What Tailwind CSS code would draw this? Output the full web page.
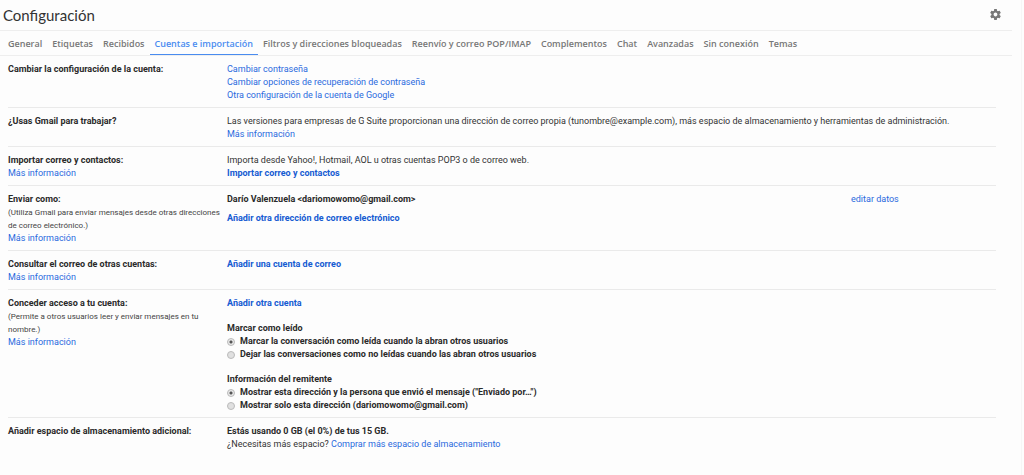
<!DOCTYPE html>
<html lang="es">
<head>
<meta charset="utf-8">
<meta name="viewport" content="width=device-width, initial-scale=1">
<title>Configuración</title>
<script src="https://cdn.jsdelivr.net/npm/@tailwindcss/browser@4"></script>
</head>
<body class="min-h-screen bg-[#fdfdfd] pr-0.5 font-['Roboto',sans-serif] text-[9px] leading-[13px] text-[#333]">
<div class="min-h-screen border-r border-[#f6f6f6] pr-[9px]">
  <header class="flex h-[31px] items-center justify-between border-b border-[#eee] pr-[10px] pl-[3px]">
    <h1 class="font-['Lato','Open_Sans',sans-serif] text-[15px] leading-5 text-[#333]">Configuración</h1>
    <button type="button" aria-label="Ajustes" class="mb-[2px] text-[#777]">
      <svg class="size-[13px]" viewBox="0 0 24 24" fill="currentColor" aria-hidden="true"><path d="M19.43 12.98c.04-.32.07-.64.07-.98s-.03-.66-.07-.98l2.11-1.65c.19-.15.24-.42.12-.64l-2-3.46c-.12-.22-.39-.3-.61-.22l-2.49 1c-.52-.4-1.08-.73-1.69-.98l-.38-2.65C14.46 2.18 14.25 2 14 2h-4c-.25 0-.46.18-.49.42l-.38 2.65c-.61.25-1.17.59-1.69.98l-2.49-1c-.23-.09-.49 0-.61.22l-2 3.46c-.13.22-.07.49.12.64l2.11 1.65c-.04.32-.07.65-.07.98s.03.66.07.98l-2.11 1.65c-.19.15-.24.42-.12.64l2 3.46c.12.22.39.3.61.22l2.49-1c.52.4 1.08.73 1.69.98l.38 2.65c.03.24.24.42.49.42h4c.25 0 .46-.18.49-.42l.38-2.65c.61-.25 1.17-.59 1.69-.98l2.49 1c.23.09.49 0 .61-.22l2-3.46c.12-.22.07-.49-.12-.64l-2.11-1.65zM12 15.500c-1.930 0-3.500-1.570-3.500-3.500s1.570-3.500 3.500-3.500 3.500 1.570 3.500 3.500-1.570 3.500-3.500 3.500z"/></svg>
    </button>
  </header>

  <nav aria-label="Secciones" class="flex h-[25px] border-b border-[#eee] pl-[3px] font-['Open_Sans',sans-serif] font-semibold whitespace-nowrap text-[#777]">
    <a href="#" class="px-[5px] pt-[6px]">General</a>
    <a href="#" class="px-[5px] pt-[6px]">Etiquetas</a>
    <a href="#" class="px-[5px] pt-[6px]">Recibidos</a>
    <a href="#" aria-current="page" class="border-b border-[#4a8cf0] px-[5px] pt-[6px] text-[#4a8cf0]">Cuentas e importación</a>
    <a href="#" class="px-[5px] pt-[6px]">Filtros y direcciones bloqueadas</a>
    <a href="#" class="px-[5px] pt-[6px]">Reenvío y correo POP/IMAP</a>
    <a href="#" class="px-[5px] pt-[6px]">Complementos</a>
    <a href="#" class="px-[5px] pt-[6px]">Chat</a>
    <a href="#" class="px-[5px] pt-[6px]">Avanzadas</a>
    <a href="#" class="px-[5px] pt-[6px]">Sin conexión</a>
    <a href="#" class="px-[5px] pt-[6px]">Temas</a>
  </nav>

  <main class="mr-4 ml-2 divide-y divide-[#eaeaea]">
    <section class="grid grid-cols-[219px_1fr] pt-[7px] pb-[5px]">
      <h2 class="font-bold text-[#2a2a2a]">Cambiar la configuración de la cuenta:</h2>
      <div class="flex flex-col items-start text-[#2a6add]">
        <a href="#">Cambiar contraseña</a>
        <a href="#">Cambiar opciones de recuperación de contraseña</a>
        <a href="#">Otra configuración de la cuenta de Google</a>
      </div>
    </section>

    <section class="grid grid-cols-[219px_1fr] pt-[7px] pb-[5px]">
      <h2 class="font-bold text-[#2a2a2a]">¿Usas Gmail para trabajar?</h2>
      <div>
        <p>Las versiones para empresas de G Suite proporcionan una dirección de correo propia (tunombre@example.com), más espacio de almacenamiento y herramientas de administración.</p>
        <a href="#" class="block text-[#2a6add]">Más información</a>
      </div>
    </section>

    <section class="grid grid-cols-[219px_1fr] pt-[7px] pb-[5px]">
      <div>
        <h2 class="font-bold text-[#2a2a2a]">Importar correo y contactos:</h2>
        <a href="#" class="block text-[#2a6add]">Más información</a>
      </div>
      <div>
        <p>Importa desde Yahoo!, Hotmail, AOL u otras cuentas POP3 o de correo web.</p>
        <a href="#" class="block font-bold text-[#155bd2]">Importar correo y contactos</a>
      </div>
    </section>

    <section class="grid grid-cols-[219px_1fr_145px] pt-[7px] pb-[5px]">
      <div>
        <h2 class="font-bold text-[#2a2a2a]">Enviar como:</h2>
        <p class="text-[8px] leading-[13px] text-[#444]">(Utiliza Gmail para enviar mensajes desde otras direcciones de correo electrónico.)</p>
        <a href="#" class="block text-[#2a6add]">Más información</a>
      </div>
      <div class="flex flex-col items-start gap-1.5 font-bold">
        <p class="text-[#2a2a2a]">Darío Valenzuela &lt;dariomowomo@gmail.com&gt;</p>
        <a href="#" class="text-[#155bd2]">Añadir otra dirección de correo electrónico</a>
      </div>
      <div><a href="#" class="text-[#2a6add]">editar datos</a></div>
    </section>

    <section class="grid grid-cols-[219px_1fr] pt-[7px] pb-[5px]">
      <div>
        <h2 class="font-bold text-[#2a2a2a]">Consultar el correo de otras cuentas:</h2>
        <a href="#" class="block text-[#2a6add]">Más información</a>
      </div>
      <div><a href="#" class="block font-bold text-[#155bd2]">Añadir una cuenta de correo</a></div>
    </section>

    <section class="grid grid-cols-[219px_1fr] pt-[7px] pb-[5px]">
      <div>
        <h2 class="font-bold text-[#2a2a2a]">Conceder acceso a tu cuenta:</h2>
        <p class="text-[8px] leading-[13px] text-[#444]">(Permite a otros usuarios leer y enviar mensajes en tu nombre.)</p>
        <a href="#" class="block text-[#2a6add]">Más información</a>
      </div>
      <div class="flex flex-col gap-3 font-bold text-[#2a2a2a]">
        <a href="#" class="block text-[#155bd2]">Añadir otra cuenta</a>
        <fieldset>
          <legend>Marcar como leído</legend>
          <label class="flex items-center gap-[5px]"><input type="radio" name="leido" checked class="size-2 appearance-none rounded-full border border-[#bbb] bg-[#eee] checked:bg-[radial-gradient(circle,#555_0_1px,#e8e8e8_2px)]">Marcar la conversación como leída cuando la abran otros usuarios</label>
          <label class="flex items-center gap-[5px]"><input type="radio" name="leido" class="size-2 appearance-none rounded-full border border-[#bbb] bg-[#e0e0e0] checked:bg-[radial-gradient(circle,#555_0_1px,#e8e8e8_2px)]">Dejar las conversaciones como no leídas cuando las abran otros usuarios</label>
        </fieldset>
        <fieldset>
          <legend>Información del remitente</legend>
          <label class="flex items-center gap-[5px]"><input type="radio" name="remitente" checked class="size-2 appearance-none rounded-full border border-[#bbb] bg-[#eee] checked:bg-[radial-gradient(circle,#555_0_1px,#e8e8e8_2px)]">Mostrar esta dirección y la persona que envió el mensaje ("Enviado por…")</label>
          <label class="flex items-center gap-[5px]"><input type="radio" name="remitente" class="size-2 appearance-none rounded-full border border-[#bbb] bg-[#e0e0e0] checked:bg-[radial-gradient(circle,#555_0_1px,#e8e8e8_2px)]">Mostrar solo esta dirección (dariomowomo@gmail.com)</label>
        </fieldset>
      </div>
    </section>

    <section class="grid grid-cols-[219px_1fr] pt-[7px] pb-[5px]">
      <h2 class="font-bold text-[#2a2a2a]">Añadir espacio de almacenamiento adicional:</h2>
      <div>
        <p class="font-bold text-[#2a2a2a]">Estás usando 0 GB (el 0%) de tus 15 GB.</p>
        <p>¿Necesitas más espacio? <a href="#" class="text-[#2a6add]">Comprar más espacio de almacenamiento</a></p>
      </div>
    </section>
  </main>
</div>
</body>
</html>
